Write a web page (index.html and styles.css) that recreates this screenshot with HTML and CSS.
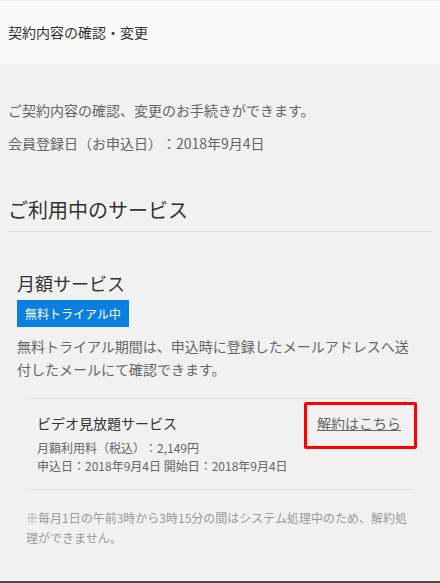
FILE: index.html
```html
<!DOCTYPE html>
<html lang="ja">
<head>
  <meta charset="utf-8">
  <title>契約内容の確認・変更</title>
  <link rel="stylesheet" href="styles.css">
</head>
<body>
  <header class="page-header">契約内容の確認・変更</header>

  <main class="contract">
    <p class="intro">ご契約内容の確認、変更のお手続きができます。</p>
    <p class="intro intro-date">会員登録日（お申込日）：2018年9月4日</p>

    <h2 class="section-title">ご利用中のサービス</h2>

    <section class="service">
      <h3 class="service-title">月額サービス</h3>
      <span class="badge">無料トライアル中</span>
      <p class="service-text">無料トライアル期間は、申込時に登録したメールアドレスへ送付したメールにて確認できます。</p>

      <div class="service-row">
        <div class="service-info">
          <div class="service-name">ビデオ見放題サービス</div>
          <div class="service-meta">月額利用料（税込）：2,149円</div>
          <div class="service-meta">申込日：2018年9月4日 開始日：2018年9月4日</div>
        </div>
        <a class="cancel-link" href="#">解約はこちら</a>
      </div>

      <p class="note">※毎月1日の午前3時から3時15分の間はシステム処理中のため、解約処理ができません。</p>
    </section>
  </main>

  <footer class="page-footer"></footer>
</body>
</html>
```

FILE: styles.css
```css
body {
  margin: 0;
  background-color: #f1f1f1;
  font-family: "Noto Sans CJK JP", sans-serif;
  color: #666;
  text-spacing-trim: space-all;
}

.page-header {
  height: 63px;
  line-height: 63px;
  padding-left: 8px;
  background-color: #fafafa;
  border-top: 1px solid #ececec;
  font-size: 14px;
  color: #333;
}

.contract {
  padding: 36px 8px 0;
}

.intro {
  margin: 0;
  font-size: 14px;
  line-height: 20px;
}

.intro-date {
  margin-top: 13px;
}

.section-title {
  margin: 43px 0 0;
  padding-bottom: 7px;
  border-bottom: 1px solid #ddd;
  font-size: 20px;
  font-weight: normal;
  line-height: 28px;
  color: #333;
}

.service {
  padding: 0 20px 0 9px;
}

.service-title {
  margin: 38px 0 0;
  font-size: 18px;
  font-weight: normal;
  line-height: 26px;
  color: #333;
}

.badge {
  display: inline-block;
  margin-top: 4px;
  padding: 0 8px;
  height: 27px;
  line-height: 27px;
  background-color: #0a7fdf;
  color: #fff;
  font-size: 12px;
}

.service-text {
  margin: 8px 0 0;
  font-size: 14px;
  line-height: 23px;
}

.service-row {
  display: flex;
  justify-content: space-between;
  align-items: flex-start;
  margin: 17px 0 0 9px;
  padding: 14px 11px 14px 11px;
  border-top: 1px solid #ddd;
  border-bottom: 1px solid #ddd;
}

.service-name {
  font-size: 14px;
  line-height: 20px;
  color: #333;
  margin-bottom: 6px;
}

.service-meta {
  font-size: 12px;
  line-height: 18px;
}

.cancel-link {
  position: relative;
  font-size: 14px;
  line-height: 20px;
  color: #666;
  text-decoration: underline;
}

.cancel-link::after {
  content: "";
  position: absolute;
  left: -13px;
  right: -16px;
  top: -11px;
  bottom: -16px;
  border: 3px solid #f00;
  border-radius: 2px;
}

.note {
  margin: 18px 0 0 9px;
  font-size: 12px;
  line-height: 20px;
  color: #999;
}

.page-footer {
  margin-top: 33px;
  border-top: 3px solid #4a4a4a;
}
```
